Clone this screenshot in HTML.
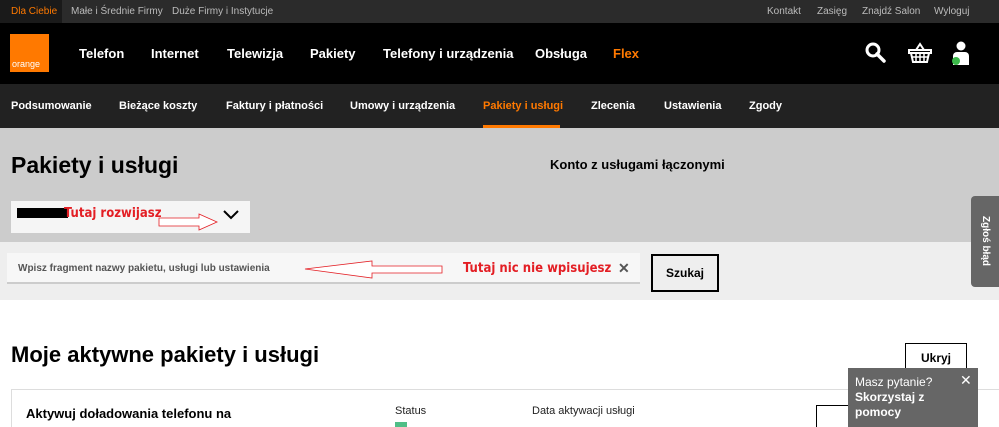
<!DOCTYPE html>
<html style="overflow:hidden;height:427px"><head><meta charset="utf-8"><style>
*{margin:0;padding:0;box-sizing:border-box}
body{width:999px;height:427px;overflow:hidden;position:relative;font-family:"Liberation Sans",Arial,sans-serif;background:#fff}
.a{position:absolute}
.top{left:0;top:0;width:999px;height:23px;background:#2b2b2b;color:#bbb;font-size:10px}
.top span{position:absolute;top:6px}
.nav{left:0;top:23px;width:999px;height:61px;background:#000;color:#fff;font-weight:bold;font-size:13px}
.nav span{position:absolute;top:23px}
.sub{left:0;top:84px;width:999px;height:44px;background:#222;color:#fff;font-weight:bold;font-size:11px}
.sub span{position:absolute;top:16px}
.red{color:#e31e24;font-family:"DejaVu Sans Condensed","Liberation Sans",sans-serif;font-weight:bold}
</style></head><body>
<div class="a top">
<div class="a" style="left:0;top:0;width:62px;height:23px;background:#1a1a1a"></div>
<span style="left:11px;color:#ff7900">Dla Ciebie</span>
<span style="left:71px">Małe i Średnie Firmy</span>
<span style="left:172px">Duże Firmy i Instytucje</span>
<span style="left:767px">Kontakt</span>
<span style="left:817px">Zasięg</span>
<span style="left:862px">Znajdź Salon</span>
<span style="left:934px">Wyloguj</span>
</div>
<div class="a nav">
<div class="a" style="left:10px;top:11px;width:39px;height:38px;background:#ff7900"><span style="position:absolute;left:2px;top:25px;font-size:9px;font-weight:normal;color:#fff">orange</span></div>
<span style="left:79px">Telefon</span>
<span style="left:151px">Internet</span>
<span style="left:227px">Telewizja</span>
<span style="left:310px">Pakiety</span>
<span style="left:383px">Telefony i urządzenia</span>
<span style="left:535px">Obsługa</span>
<span style="left:613px;color:#ff7900">Flex</span>
<svg class="a" style="left:864px;top:18px" width="24" height="24" viewBox="0 0 24 24"><circle cx="9" cy="9" r="6" fill="none" stroke="#fff" stroke-width="3"/><path d="M13 13l7 7" stroke="#fff" stroke-width="3.5" stroke-linecap="round"/></svg>
<svg class="a" style="left:907px;top:18px" width="26" height="24" viewBox="0 0 26 24"><path d="M9 9l4-6 4 6" fill="none" stroke="#fff" stroke-width="2"/><path d="M2 9h22v3H2zM4 12l2 9h14l2-9" fill="none" stroke="#fff" stroke-width="2"/><path d="M9 13v7M13 13v7M17 13v7M5 16h16" stroke="#fff" stroke-width="1.5"/></svg>
<svg class="a" style="left:951px;top:18px" width="20" height="26" viewBox="0 0 20 26"><circle cx="10" cy="5" r="4.5" fill="#fff"/><path d="M2 24v-9a4 4 0 0 1 4-4h8a4 4 0 0 1 4 4v9z" fill="#fff"/><circle cx="5" cy="20" r="4" fill="#3cb94a"/></svg>
</div>
<div class="a sub">
<span style="left:11px">Podsumowanie</span>
<span style="left:119px">Bieżące koszty</span>
<span style="left:226px">Faktury i płatności</span>
<span style="left:350px">Umowy i urządzenia</span>
<span style="left:483px;color:#ff7900">Pakiety i usługi</span>
<div class="a" style="left:483px;top:41px;width:77px;height:3px;background:#ff7900"></div>
<span style="left:591px">Zlecenia</span>
<span style="left:664px">Ustawienia</span>
<span style="left:749px">Zgody</span>
</div>
<div class="a" style="left:0;top:128px;width:999px;height:114px;background:#ccc"></div>
<div class="a" style="left:11px;top:152px;font-size:23px;font-weight:bold;color:#000">Pakiety i usługi</div>
<div class="a" style="left:550px;top:157px;font-size:13px;font-weight:bold">Konto z usługami łączonymi</div>
<div class="a" style="left:11px;top:201px;width:239px;height:32px;background:#f5f5f5"></div>
<div class="a" style="left:17px;top:208px;width:51px;height:10px;background:#000"></div>
<div class="a red" style="left:64px;top:206px;font-size:13px">Tutaj rozwijasz</div>
<svg class="a" style="left:158px;top:212px" width="62" height="20"><path d="M1 6h40l0-4 18 8-18 8 0-4H1z" fill="#fff" stroke="#e31e24" stroke-width=".8"/></svg>
<svg class="a" style="left:222px;top:209px" width="18" height="12"><path d="M2 2l7 7 7-7" fill="none" stroke="#000" stroke-width="2"/></svg>
<div class="a" style="left:0;top:242px;width:999px;height:58px;background:#eee"></div>
<div class="a" style="left:7px;top:253px;width:633px;height:31px;background:#f7f7f7;border-bottom:2px solid #ccc"></div>
<div class="a" style="left:18px;top:263px;font-size:10px;font-weight:bold;color:#555">Wpisz fragment nazwy pakietu, usługi lub ustawienia</div>
<svg class="a" style="left:304px;top:259px" width="140" height="20"><path d="M1 10L68 2v5h70v7H68v5z" fill="#fff" stroke="#e31e24" stroke-width=".8"/></svg>
<div class="a red" style="left:463px;top:261px;font-size:13px">Tutaj nic nie wpisujesz</div>
<div class="a" style="left:618px;top:260px;font-size:14px;font-weight:bold;color:#555">✕</div>
<div class="a" style="left:651px;top:254px;width:68px;height:38px;border:2px solid #000;font-size:12px;font-weight:bold;text-align:center;line-height:34px">Szukaj</div>
<div class="a" style="left:11px;top:342px;font-size:22px;font-weight:bold">Moje aktywne pakiety i usługi</div>
<div class="a" style="left:905px;top:343px;width:62px;height:31px;border:1.5px solid #000;font-size:12px;font-weight:bold;text-align:center;line-height:28px">Ukryj</div>
<div class="a" style="left:11px;top:389px;width:988px;height:38px;border:1px solid #ddd;border-bottom:none;border-right:none"></div>
<div class="a" style="left:26px;top:406px;font-size:13px;font-weight:bold;line-height:15px">Aktywuj doładowania telefonu na</div>
<div class="a" style="left:395px;top:405px;font-size:11px;line-height:13px;color:#222">Status</div>
<div class="a" style="left:395px;top:422px;width:12px;height:5px;background:#50be87"></div>
<div class="a" style="left:532px;top:405px;font-size:11px;line-height:13px;color:#222">Data aktywacji usługi</div>
<div class="a" style="left:816px;top:405px;width:40px;height:22px;border:1.5px solid #000;border-bottom:none"></div>
<div class="a" style="left:971px;top:196px;width:28px;height:91px;background:#666;border-radius:4px 0 0 4px"></div>
<div class="a" style="left:955px;top:235px;width:60px;font-size:10px;line-height:12px;font-weight:bold;color:#fff;transform:rotate(90deg);text-align:center">Zgłoś błąd</div>
<div class="a" style="left:848px;top:368px;width:130px;height:59px;background:#666;color:#fff">
<div class="a" style="left:7px;top:7px;font-size:12px;line-height:14px">Masz pytanie?</div>
<div class="a" style="left:7px;top:22px;font-size:12px;font-weight:bold;line-height:15px">Skorzystaj z<br>pomocy</div>
<div class="a" style="left:112px;top:4px;font-size:14px;line-height:16px">✕</div>
</div>
</body></html>
